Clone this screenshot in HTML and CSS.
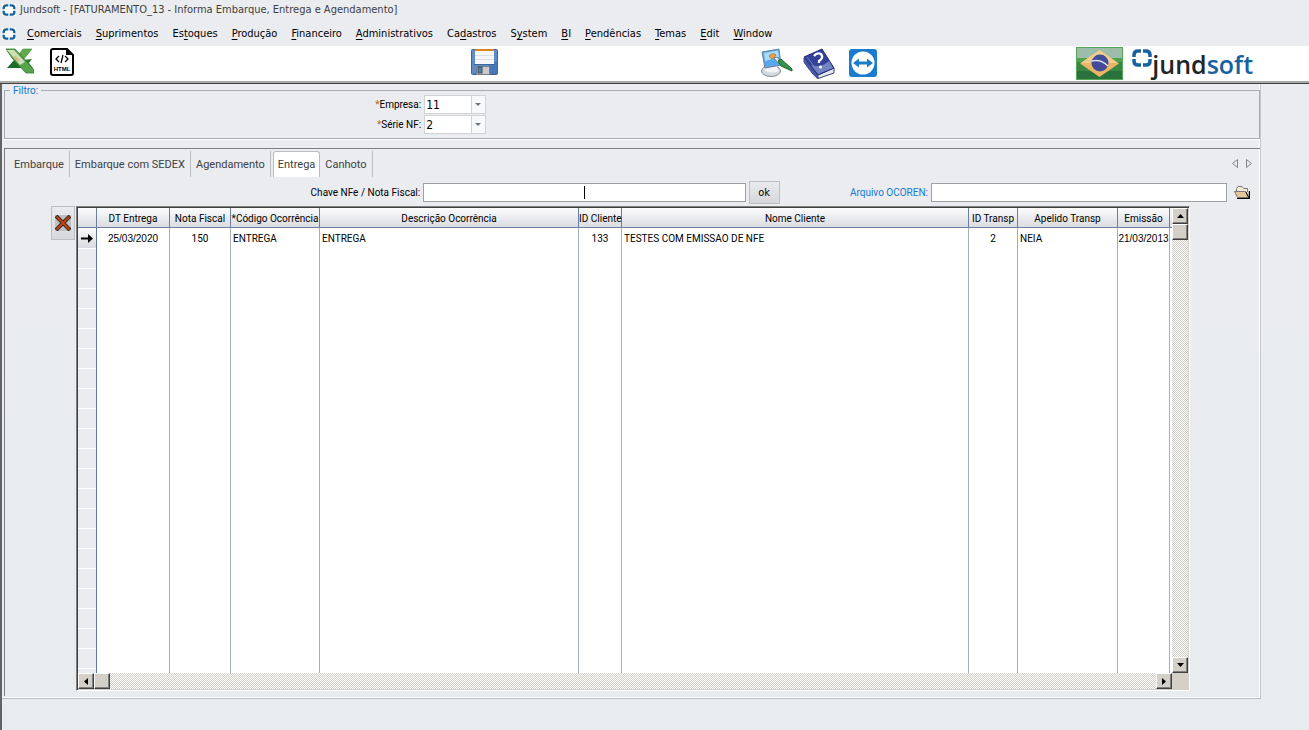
FILE: index.html
```html
<!DOCTYPE html>
<html lang="pt-BR">
<head>
<meta charset="utf-8">
<title>Jundsoft - [FATURAMENTO_13 - Informa Embarque, Entrega e Agendamento]</title>
<link rel="stylesheet" href="styles.css">
</head>
<body>
<svg class="symbols" aria-hidden="true">
  <symbol id="mark" viewBox="0 0 20 18">
    <path d="M9 2H6Q2 2 2 6V8M2 10V12Q2 16 6 16H9M11 16H14Q18 16 18 12V10M18 8V6Q18 2 14 2H11" fill="none" stroke="#17619f" stroke-width="3.500"/>
  </symbol>
</svg>
<header class="titlebar">
  <svg class="app-icon"><use href="#mark"/></svg>
  <span class="title">Jundsoft - [FATURAMENTO_13 - Informa Embarque, Entrega e Agendamento]</span>
</header>
<nav class="menubar">
  <svg class="app-icon"><use href="#mark"/></svg>
  <button class="menu"><u>C</u>omerciais</button>
  <button class="menu"><u>S</u>uprimentos</button>
  <button class="menu">Es<u>t</u>oques</button>
  <button class="menu"><u>P</u>rodução</button>
  <button class="menu"><u>F</u>inanceiro</button>
  <button class="menu"><u>A</u>dministrativos</button>
  <button class="menu">Ca<u>d</u>astros</button>
  <button class="menu">S<u>y</u>stem</button>
  <button class="menu"><u>B</u>I</button>
  <button class="menu"><u>P</u>endências</button>
  <button class="menu"><u>T</u>emas</button>
  <button class="menu"><u>E</u>dit</button>
  <button class="menu"><u>W</u>indow</button>
</nav>
<div class="toolbar">
  <div class="group files">
    <button class="tool" aria-label="Excel">
      <svg width="28" height="26" viewBox="0 0 28 26">
        <path d="M16 12L26 11 23 15 27 20H14z" fill="#2c7a33"/>
        <path d="M1 20L9 11 16 20z" fill="#1d6b2a"/>
        <path d="M17 1H26L13 17 8 12z" fill="#62ac50" stroke="#3c8c3c" stroke-width=".6"/>
        <path d="M0 1H9L28 22V25H20L6 10z" fill="#58a44c" stroke="#2f7f35" stroke-width=".8"/>
        <path d="M1 2H8L19 14 14 17z" fill="#cfe0b4"/>
        <path d="M9 7l5 5-2 2-4-4z" fill="#d9b98c"/>
      </svg>
    </button>
    <button class="tool" aria-label="HTML">
      <svg width="24" height="28" viewBox="0 0 24 28">
        <path d="M3 1H17L23 7V25Q23 27 21 27H3Q1 27 1 25V3Q1 1 3 1z" fill="#fff" stroke="#000" stroke-width="2"/>
        <path d="M16 1V7H23z"/>
        <path d="M9 8L6 11 9 14M15 8L18 11 15 14M13 7L11 15" fill="none" stroke="#000" stroke-width="1.300"/>
        <text x="12" y="23" class="html-mark">HTML</text>
      </svg>
    </button>
  </div>
  <div class="group">
    <button class="tool" aria-label="Salvar">
      <svg width="27" height="27" viewBox="0 0 27 27">
        <rect x=".5" y=".5" width="26" height="25" rx="1" fill="#5f8dc9" stroke="#44638f"/>
        <path d="M2 25L26 12V25z" fill="#4877b8"/>
        <rect x="4" y="1" width="19" height="14" fill="#f7f7fa"/>
        <path d="M4 1H23" stroke="#d88326" stroke-width="2"/>
        <path d="M4 6.500H23M4 10.500H23" stroke="#dcdde5"/>
        <path d="M3 15.500H24" stroke="#3d659e"/>
        <rect x="5.500" y="17.500" width="13" height="8" fill="#cbcac4" stroke="#74808e"/>
        <rect x="7" y="18" width="4" height="6" fill="#567eae" stroke="#3b4c62"/>
      </svg>
    </button>
  </div>
  <div class="group utilities">
    <button class="tool" aria-label="Aparência">
      <svg width="32" height="30" viewBox="0 0 32 30">
        <ellipse cx="10" cy="23" rx="9.500" ry="5.500" fill="#d3d8de" stroke="#858d98"/>
        <path d="M6 17H15L18 23Q10 27 3 22z" fill="#f2f4f7"/>
        <path d="M1 4L18 1 20 17 4 20z" fill="#59a7ec" stroke="#6c8097"/>
        <path d="M3 5L17 2.500 18 9 4 13z" fill="#a8dafa"/>
        <path d="M8 8Q12 4 15 7L13 10Q10 12 8 8z" fill="#eda343" stroke="#a36a20" stroke-width=".7"/>
        <path d="M13 10L16 9 20 14 17 15z" fill="#e7eef2" stroke="#546776" stroke-width=".7"/>
        <path d="M17 13L20 11 31 21 31 23 20 18z" fill="#369448" stroke="#1d6830"/>
      </svg>
    </button>
    <button class="tool" aria-label="Ajuda">
      <svg width="32" height="32" viewBox="0 0 32 32">
        <path d="M1 10L15 27 31 20V25L15 30.500Q12 30 1 14z" fill="#e4e8f0" stroke="#35437c"/>
        <path d="M1 15L14 30.500H16L15 27 1 10z" fill="#4654a0"/>
        <path d="M1 9L19 1 31 20 15 27z" fill="#33419a" stroke="#263276"/>
        <path d="M8 17Q19 20 26 13L30 20 15 26z" fill="#7484c5"/>
        <path d="M4 9L17 26" stroke="#7180bd"/>
        <path d="M11 8Q14 4 18 6Q21 10 16 13V15" fill="none" stroke="#fff" stroke-width="2.300"/>
        <circle cx="17.500" cy="19" r="1.500" fill="#fff"/>
      </svg>
    </button>
    <button class="tool" aria-label="Suporte remoto">
      <svg width="28" height="28" viewBox="0 0 28 28">
        <rect width="28" height="28" rx="3" fill="#1a7bd0"/>
        <circle cx="14" cy="14" r="11.500" fill="#fff"/>
        <path d="M4 14L10 9.500V12.500H18V9.500L24 14 18 18.500V15.500H10V18.500z" fill="#197dcb"/>
      </svg>
    </button>
  </div>
  <div class="group brand">
    <svg width="47" height="33" viewBox="0 0 47 33">
      <rect width="47" height="33" fill="#2a713c"/>
      <rect x="1" y="1" width="45" height="10" fill="#9dbdaa"/>
      <rect x="1" y="11" width="45" height="4" fill="#4fa34c"/>
      <rect x="1" y="15" width="45" height="9" fill="#3a8745"/>
      <path d="M4 16.500L23.500 3 43 16.500 23.500 30z" fill="#ecb563"/>
      <path d="M5 16L23.500 3 42 16z" fill="#efcd91"/>
      <circle cx="24" cy="16" r="8.500" fill="#434a98"/>
      <path d="M16 14Q25 12 32 19" fill="none" stroke="#d9e0ed" stroke-width="1.500"/>
      <rect x=".5" y=".5" width="46" height="32" fill="none" stroke="#55a85a"/>
    </svg>
    <div class="logo">
      <svg class="logo-mark"><use href="#mark"/></svg>
      <span class="logo-text">jund<b>soft</b></span>
    </div>
  </div>
</div>
<main class="workspace">
  <div class="form">
    <fieldset class="filter">
      <legend>Filtro:</legend>
      <label for="empresa"><i>*</i>Empresa:</label>
      <div class="combo"><select id="empresa"><option>11</option></select></div>
      <label for="serie"><i>*</i>Série NF:</label>
      <div class="combo"><select id="serie"><option>2</option></select></div>
    </fieldset>
    <section class="panel">
      <div class="tabs">
        <button class="tab">Embarque</button>
        <button class="tab">Embarque com SEDEX</button>
        <button class="tab">Agendamento</button>
        <button class="tab active">Entrega</button>
        <button class="tab">Canhoto</button>
        <div class="tab-scroll">
          <button aria-label="Anterior"><svg width="6" height="9" viewBox="0 0 6 9"><path d="M5.500 .5V8.500L.5 4.500z"/></svg></button>
          <button aria-label="Próximo"><svg width="6" height="9" viewBox="0 0 6 9"><path d="M.5 .5V8.500L5.500 4.500z"/></svg></button>
        </div>
      </div>
      <div class="search">
        <label for="chave">Chave NFe / Nota Fiscal:</label>
        <div class="entry"><input id="chave" type="text"><span class="caret"></span></div>
        <button class="ok">ok</button>
        <label class="blue" for="arquivo">Arquivo OCOREN:</label>
        <input id="arquivo" type="text">
        <button class="folder" aria-label="Abrir arquivo">
          <svg width="16" height="13" viewBox="0 0 16 13">
            <path d="M3 12.500H15.500V5" fill="none" stroke="#000" stroke-width="1.500"/>
            <path d="M2.500 6V2.500L4 .5H8L9.500 2.500H13.500V6" fill="#f4ead6" stroke="#777"/>
            <path d="M.5 5.500H11.500L14.500 11.500H3.500z" fill="#e3c795" stroke="#777"/>
            <path d="M12 6L15 12" stroke="#000"/>
          </svg>
        </button>
      </div>
      <div class="content">
        <button class="delete" aria-label="Excluir">
          <svg width="16" height="16" viewBox="0 0 16 16"><rect width="16" height="16" fill="#c0c1c4"/><path d="M1 1L15 15M15 1L1 15" stroke="#222" stroke-width="4"/><path d="M1.500 1.500L14.500 14.500M14.500 1.500L1.500 14.500" stroke="#c8440f" stroke-width="2.200"/></svg>
        </button>
        <div class="grid">
          <table>
            <colgroup><col class="c-mark"><col class="c-date"><col class="c-note"><col class="c-code"><col class="c-desc"><col class="c-id"><col><col class="c-idt"><col class="c-nick"><col class="c-issue"><col class="c-rest"></colgroup>
            <thead>
              <tr><th></th><th>DT Entrega</th><th>Nota Fiscal</th><th>*Código Ocorrência</th><th>Descrição Ocorrência</th><th>ID Cliente</th><th>Nome Cliente</th><th>ID Transp</th><th>Apelido Transp</th><th>Emissão</th><th></th></tr>
            </thead>
            <tbody>
              <tr class="row"><td class="current"><svg width="12" height="9" viewBox="0 0 12 9"><path d="M0 4.500H9" stroke="#000" stroke-width="2"/><path d="M7 0L12 4.500 7 9z"/></svg></td><td class="mid date">25/03/2020</td><td class="mid">150</td><td>ENTREGA</td><td>ENTREGA</td><td class="mid">133</td><td>TESTES COM EMISSAO DE NFE</td><td class="mid">2</td><td>NEIA</td><td class="mid date">21/03/2013</td><td></td></tr>
              <tr class="blank"><td class="rows"></td><td></td><td></td><td></td><td></td><td></td><td></td><td></td><td></td><td></td><td></td></tr>
            </tbody>
          </table>
          <div class="scroll vertical">
            <button aria-label="Subir"><svg width="7" height="4"><path d="M0 4L3.500 0 7 4z"/></svg></button>
            <span class="thumb"></span><span class="track"></span>
            <button aria-label="Descer"><svg width="7" height="4"><path d="M0 0L3.500 4 7 0z"/></svg></button>
          </div>
          <div class="scroll horizontal">
            <button aria-label="Esquerda"><svg width="4" height="7"><path d="M4 0L0 3.500 4 7z"/></svg></button>
            <span class="thumb"></span><span class="track"></span>
            <button aria-label="Direita"><svg width="4" height="7"><path d="M0 0L4 3.500 0 7z"/></svg></button>
          </div>
        </div>
      </div>
    </section>
  </div>
</main>
</body>
</html>
```

FILE: styles.css
```css
* { box-sizing: border-box; }
body {
  margin: 0;
  min-height: 100vh;
  display: flex;
  flex-direction: column;
  background: #ebecf0;
  color: #000;
  font: 10px/14px Roboto, "Liberation Sans", sans-serif;
}
button, input, select { font: inherit; color: inherit; margin: 0; border-radius: 0; }
button { padding: 0; border: 0; background: none; }
svg { display: block; flex: none; }
.symbols { position: absolute; width: 0; height: 0; }

.titlebar, .menubar {
  display: flex;
  align-items: center;
  font: 11px/16px "DejaVu Sans Condensed", "DejaVu Sans", sans-serif;
}
.titlebar { height: 20px; padding: 0 2px; gap: 4px; color: #404040; }
.menubar { height: 26px; padding: 2px 2px 0; gap: 14px; }
.app-icon { width: 14px; height: 12px; background: #fff; }
.menubar .app-icon { margin-right: -3px; }
.menu u { text-underline-offset: 2px; }

.toolbar {
  display: grid;
  grid-template-columns: 36% 22% 24% 1fr;
  height: 38px;
  background: #fff;
  border-bottom: 1px solid #3f3f42;
  box-shadow: inset 0 -2px #aaaaa6;
}
.group { display: flex; align-items: flex-start; padding-top: 3px; }
.files { padding-left: 6px; padding-top: 2px; gap: 16px; }
.utilities { padding: 2px 0 0 2px; gap: 10px; }
.utilities .tool:last-child { margin: 1px 0 0 4px; }
.brand { gap: 9px; padding-left: 3px; padding-top: 1px; }
.logo { display: flex; align-items: flex-start; }
.logo-mark { width: 20px; height: 18px; margin-top: 2px; }
.logo-text { font: 600 25px/34px "Open Sans", sans-serif; color: #1e2728; }
.logo-text b { font-weight: 600; color: #17619f; }
.html-mark { font: bold 6px "Liberation Sans", Arial, sans-serif; text-anchor: middle; }

.workspace {
  flex: 1;
  display: flex;
  padding: 0 48px 31px 0;
  border-left: 2px solid #636366;
  background: linear-gradient(#ebecf0, #e8ecef);
}
.form {
  flex: 1;
  display: flex;
  flex-direction: column;
  gap: 9px;
  padding: 0 0 2px 2px;
  border-right: 1px solid #c6c6c8;
  border-bottom: 1px solid #bcbcbe;
  box-shadow: inset -1px -1px #fff;
}
.filter {
  display: grid;
  grid-template-columns: 33% 62px;
  column-gap: 3px;
  row-gap: 1px;
  align-content: start;
  align-items: center;
  height: 55px;
  margin: 0;
  padding: 0 1px 0 4px;
  border: 1px solid #a6acb1;
  box-shadow: 0 1px #fff;
}
.filter legend { margin: 0 0 -2px 1px; padding: 0 3px; line-height: 13px; color: #1478d2; }
.filter label { padding-left: 1px; text-align: right; }
.filter i { font-style: normal; color: #b36a16; }
.filter .combo { position: relative; }
.combo select {
  display: block;
  width: 62px;
  height: 19px;
  padding: 0 1px;
  border: 1px solid #d0d2d4;
  background: linear-gradient(90deg, #fff 46px, #d0d2d4 46px, #d0d2d4 47px, #f8f9fa 47px);
  font: 12px/16px "DejaVu Sans Condensed", "DejaVu Sans", sans-serif;
  appearance: none;
}
.combo::after {
  content: "";
  position: absolute;
  right: 5px;
  top: 8px;
  border: 3px solid transparent;
  border-top-color: #707476;
  border-bottom: 0;
  pointer-events: none;
}
.panel {
  flex: 1;
  display: flex;
  flex-direction: column;
  padding-bottom: 5px;
  border-top: 1px solid #7d7f82;
  border-left: 1px solid #7d7f82;
}
.tabs { display: flex; height: 30px; padding: 2px 8px 2px 4px; }
.tab {
  padding: 1px 5px 0;
  border-right: 1px solid #b9bcc0;
  color: #404040;
  font: 11px/24px Roboto, "Liberation Sans", sans-serif;
}
.tab.active {
  margin-left: 2px;
  border: 1px solid #b9bcc0;
  border-bottom: 0;
  border-radius: 3px 3px 0 0;
  background: #fff;
  padding: 0 4px;
}
.tab-scroll { display: flex; gap: 8px; margin-left: auto; padding-bottom: 2px; }
.tab-scroll path { fill: none; stroke: #808488; }

.search {
  display: grid;
  grid-template-columns: 33% 26% 31px 1fr 296px 21px;
  align-items: center;
  column-gap: 3px;
  height: 27px;
  padding: 0 9px 0 6px;
}
.search label { text-align: right; }
.search .blue { color: #1478d2; }
.search input { display: block; width: 100%; height: 19px; padding: 0 2px; border: 1px solid #9da0a3; background: #fff; }
.entry { position: relative; }
.caret { position: absolute; left: 50%; top: 3px; width: 1px; height: 13px; background: #000; }
.ok {
  height: 23px;
  border: 1px solid #bcbec2;
  background: linear-gradient(#e9eaed, #d6d8dc);
  font: 11px/16px "DejaVu Sans Condensed", "DejaVu Sans", sans-serif;
}
.folder { margin-left: 4px; }

.content { flex: 1; display: flex; gap: 1px; padding: 0 70px 0 46px; }
.delete {
  display: grid;
  place-items: center;
  width: 24px;
  height: 34px;
  border: 1px solid #bcbec2;
  background: linear-gradient(#e9eaed, #d6d8dc);
}
.grid {
  flex: 1;
  display: grid;
  grid-template-columns: 1fr 16px;
  grid-template-rows: 1fr 16px;
  border: 1px solid #7f7f7f;
  border-right-color: #fff;
  border-bottom-color: #fff;
  padding: 1px;
  background: #d4d0c8;
  box-shadow: inset 1px 1px #404040;
}
table { width: 100%; border-collapse: separate; border-spacing: 0; table-layout: fixed; background: #fff; }
.c-mark { width: 19px; }
.c-date { width: 73px; }
.c-note { width: 61px; }
.c-code { width: 89px; }
.c-desc { width: 259px; }
.c-id { width: 43px; }
.c-idt { width: 49px; }
.c-nick { width: 100px; }
.c-issue { width: 52px; }
.c-rest { width: 2px; }
th {
  height: 20px;
  padding: 2px 0 0;
  border-right: 1px solid #6b80a0;
  border-bottom: 1px solid #6b80a0;
  background: linear-gradient(#fcfcfd, #dadce1);
  font-weight: normal;
  white-space: nowrap;
}
td { padding: 0 0 0 2px; border-right: 1px solid #a5aeb9; white-space: nowrap; }
td:first-child { border-right-color: #5c78a4; }
th:last-child, td:last-child { border-right: 0; }
.row td { height: 20px; padding-top: 2px; }
.row .mid { text-align: center; padding: 2px 0 0; }
.row .date { font-family: "Liberation Sans", Arial, sans-serif; }
.row .current { padding: 0; background: linear-gradient(#fafafb, #d9dbe0); }
.current svg { margin: auto; }
.blank td { height: auto; }
.blank .rows { background: repeating-linear-gradient(#fff 0, #fff 1px, #eaebef 1px, #eaebef 20px); }

.scroll { display: flex; }
.vertical { flex-direction: column; }
.scroll button, .thumb {
  display: grid;
  place-items: center;
  width: 16px;
  height: 16px;
  flex: none;
  background: #d4d0c8;
  border: 1px solid #fff;
  border-right-color: #404040;
  border-bottom-color: #404040;
  box-shadow: inset -1px -1px #808080;
}
.track { flex: 1; background: repeating-conic-gradient(#fff 0 25%, #d4d0c8 0 50%) 0 0 / 2px 2px; }
```
